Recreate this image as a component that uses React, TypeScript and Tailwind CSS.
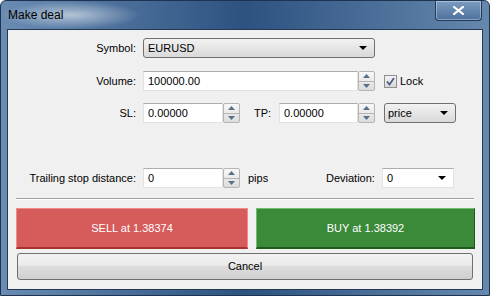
import React from "react";

const font = { fontFamily: '"Liberation Sans", Arial, sans-serif' };

function Spinner() {
  return (
    <div className="flex flex-col w-[17px] h-full border border-[#b5b5b5] rounded-[2px] bg-gradient-to-b from-[#f8f8f8] to-[#dcdcdc]">
      <div className="flex-1 flex items-center justify-center border-b border-[#b5b5b5]">
        <svg width="7" height="4" viewBox="0 0 7 4"><path d="M0 4 L3.5 0 L7 4 Z" fill="#5a6f8c" /></svg>
      </div>
      <div className="flex-1 flex items-center justify-center">
        <svg width="7" height="4" viewBox="0 0 7 4"><path d="M0 0 L3.5 4 L7 0 Z" fill="#5a6f8c" /></svg>
      </div>
    </div>
  );
}

function SpinInput({ value, w }: { value: string; w: string }) {
  return (
    <div className={`flex h-[20px] ${w}`}>
      <div className="flex-1 bg-white border border-[#e3e3e3] border-t-[#abadb3] flex items-center pl-[4px] text-[11px] text-black">
        {value}
      </div>
      <Spinner />
    </div>
  );
}

function Arrow() {
  return (
    <svg width="8" height="4" viewBox="0 0 8 4"><path d="M0 0 L8 0 L4 4 Z" fill="#000" /></svg>
  );
}

export default function App() {
  return (
    <div
      className="w-[490px] h-[296px] rounded-t-[6px] border border-[#1c3352] bg-gradient-to-r from-[#6a8cb3] via-[#2d5280] to-[#6688ad] relative overflow-hidden"
      style={font}
    >
      <div className="absolute left-0 top-0 w-[140px] h-[28px] bg-[radial-gradient(ellipse_at_center,rgba(255,255,255,0.55),rgba(255,255,255,0)_70%)]" />
      <div className="h-[28px] flex items-start relative">
        <div className="pl-[7px] pt-[5px] text-[12px] text-black">Make deal</div>
        <div className="ml-auto mr-[7px] w-[47px] h-[20px] rounded-b-[4px] border border-t-0 border-[#1f3a5c] bg-gradient-to-b from-[#7d9cc0] to-[#4d719c] flex items-center justify-center shadow-[inset_0_0_0_1px_rgba(255,255,255,0.35)]">
          <svg width="11" height="9" viewBox="0 0 11 9">
            <path d="M1 1 L10 8 M10 1 L1 8" stroke="#fff" strokeWidth="2.2" strokeLinecap="square" />
          </svg>
        </div>
      </div>
      <div className="mx-[6px] h-[261px] border border-[#233a55] bg-[#f0f0f0] text-[11px] text-black flex flex-col relative">
        <div className="flex items-center mt-[8px] h-[20px]">
          <div className="w-[128px] text-right">Symbol:</div>
          <div className="ml-[7px] w-[232px] h-[20px] border border-[#707070] rounded-[3px] bg-gradient-to-b from-[#f2f2f2] to-[#d9d9d9] flex items-center pl-[4px] pr-[7px]">
            <span>EURUSD</span>
            <span className="ml-auto"><Arrow /></span>
          </div>
        </div>
        <div className="flex items-center mt-[13px] h-[20px]">
          <div className="w-[128px] text-right">Volume:</div>
          <div className="ml-[7px]"><SpinInput value="100000.00" w="w-[232px]" /></div>
          <div className="ml-[9px] w-[13px] h-[13px] border border-[#8f8f8f] bg-gradient-to-b from-[#f4f4f4] to-[#d8d8d8] flex items-center justify-center">
            <svg width="9" height="9" viewBox="0 0 9 9"><path d="M1 4.5 L3.5 7.5 L8 1" stroke="#4a5f8a" strokeWidth="1.8" fill="none" /></svg>
          </div>
          <div className="ml-[3px]">Lock</div>
        </div>
        <div className="flex items-center mt-[12px] h-[20px]">
          <div className="w-[128px] text-right">SL:</div>
          <div className="ml-[7px]"><SpinInput value="0.00000" w="w-[97px]" /></div>
          <div className="ml-[14px] w-[17px]">TP:</div>
          <div className="ml-[8px]"><SpinInput value="0.00000" w="w-[96px]" /></div>
          <div className="ml-[9px] w-[72px] h-[20px] border border-[#707070] rounded-[3px] bg-gradient-to-b from-[#f2f2f2] to-[#d9d9d9] flex items-center pl-[3px] pr-[7px]">
            <span>price</span>
            <span className="ml-auto"><Arrow /></span>
          </div>
        </div>
        <div className="flex items-center mt-[45px] h-[20px]">
          <div className="w-[128px] text-right">Trailing stop distance:</div>
          <div className="ml-[7px]"><SpinInput value="0" w="w-[97px]" /></div>
          <div className="ml-[8px] w-[40px]">pips</div>
          <div className="ml-[38px]">Deviation:</div>
          <div className="ml-[7px] w-[72px] h-[20px] bg-white border border-[#e3e3e3] border-t-[#abadb3] flex items-center pl-[4px] pr-[7px]">
            <span>0</span>
            <span className="ml-auto"><Arrow /></span>
          </div>
        </div>
        <div className="mt-[10px] mx-[8px] h-[2px] border-t border-[#a0a0a0] border-b border-b-white" />
        <div className="flex mt-[8px] mx-[8px] gap-[8px] h-[41px]">
          <div className="w-[232px] bg-[#d65b5b] border border-[#f08c8c] border-b-[#a83232] border-b-2 flex items-center justify-center text-white">
            SELL at 1.38374
          </div>
          <div className="flex-1 bg-[#3a8a3a] border border-[#6cc06c] border-b-[#1d5a1d] border-b-2 border-r-[#1d5a1d] mr-[-1px] flex items-center justify-center text-white">
            BUY at 1.38392
          </div>
        </div>
        <div className="mt-[4px] mx-[9px] h-[27px] border border-[#707070] rounded-[3px] bg-[linear-gradient(#f2f2f2_0%,#ebebeb_45%,#dddddd_50%,#cfcfcf_100%)] flex items-center justify-center">
          Cancel
        </div>
      </div>
    </div>
  );
}
